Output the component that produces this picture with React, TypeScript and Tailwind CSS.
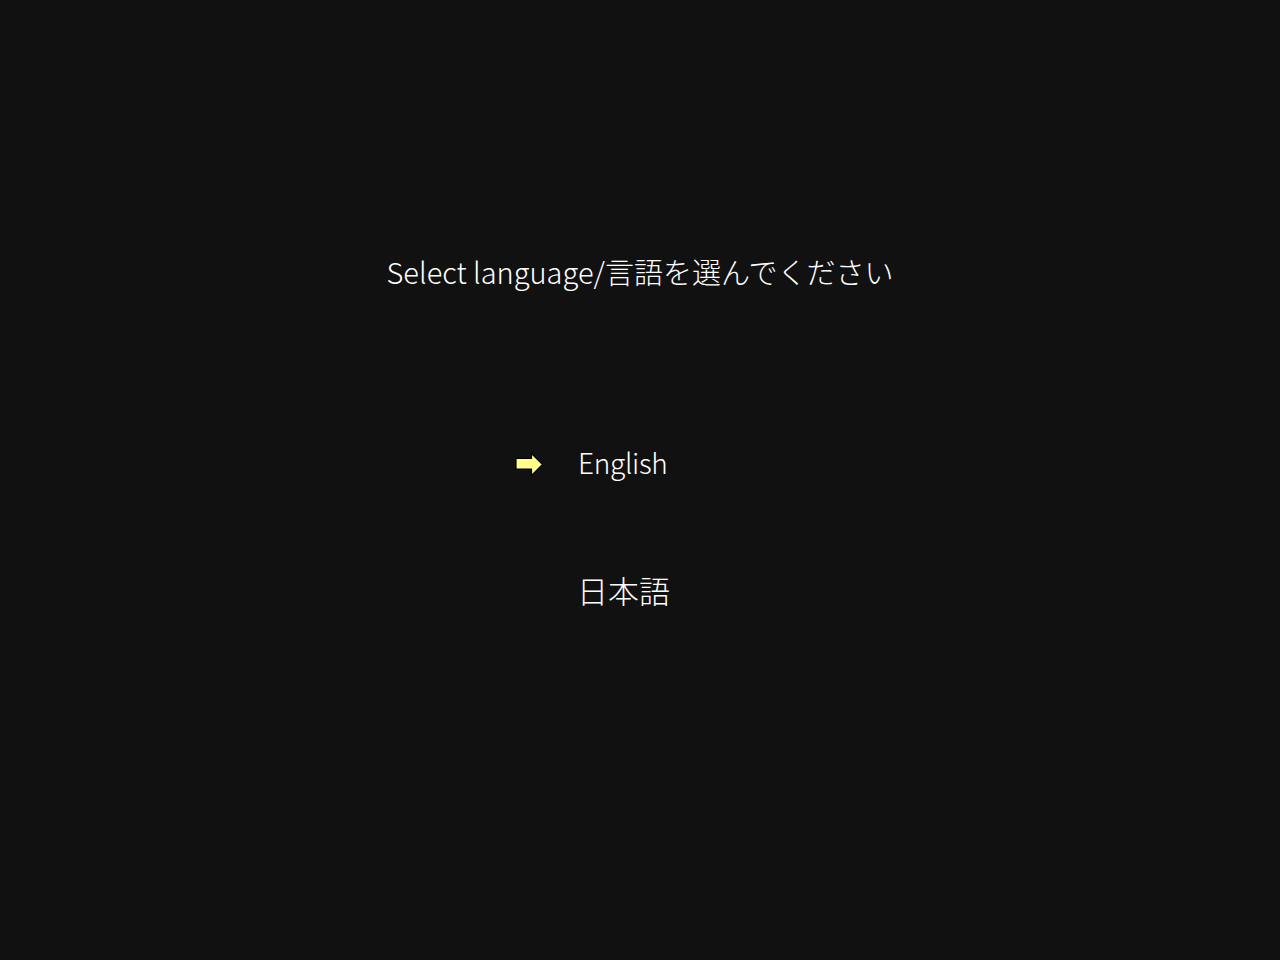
import React from "react";

function Arrow() {
  return (
    <svg width="30" height="24" viewBox="0 0 30 24" className="block mt-[4px]">
      <path
        d="M2 6.5 H17.5 V1.5 L28.5 12.5 L17.5 23.5 V17 H2 Z"
        fill="#ffff8c"
        stroke="#000000"
        strokeWidth="1.2"
        strokeLinejoin="miter"
      />
    </svg>
  );
}

export default function App() {
  const font = { fontFamily: '"Noto Sans CJK JP", "Noto Sans", sans-serif' };
  return (
    <div className="w-[1280px] h-[960px] bg-[#111111] text-white overflow-hidden" style={font}>
      <div className="pt-[253px] h-[290px] flex justify-center">
        <div className="text-[29px] leading-[36px] font-light whitespace-nowrap">
          Select language/言語を選んでください
        </div>
      </div>
      <div className="pl-[514px] pt-[154px] flex flex-col gap-[92px]">
        <div className="flex items-center h-[36px]">
          <Arrow />
          <span className="ml-[34px] text-[28px] leading-[36px] font-light tracking-[-0.3px]">English</span>
        </div>
        <div className="flex items-center h-[36px]">
          <span className="ml-[63px] text-[31px] leading-[36px] font-light">日本語</span>
        </div>
      </div>
    </div>
  );
}
